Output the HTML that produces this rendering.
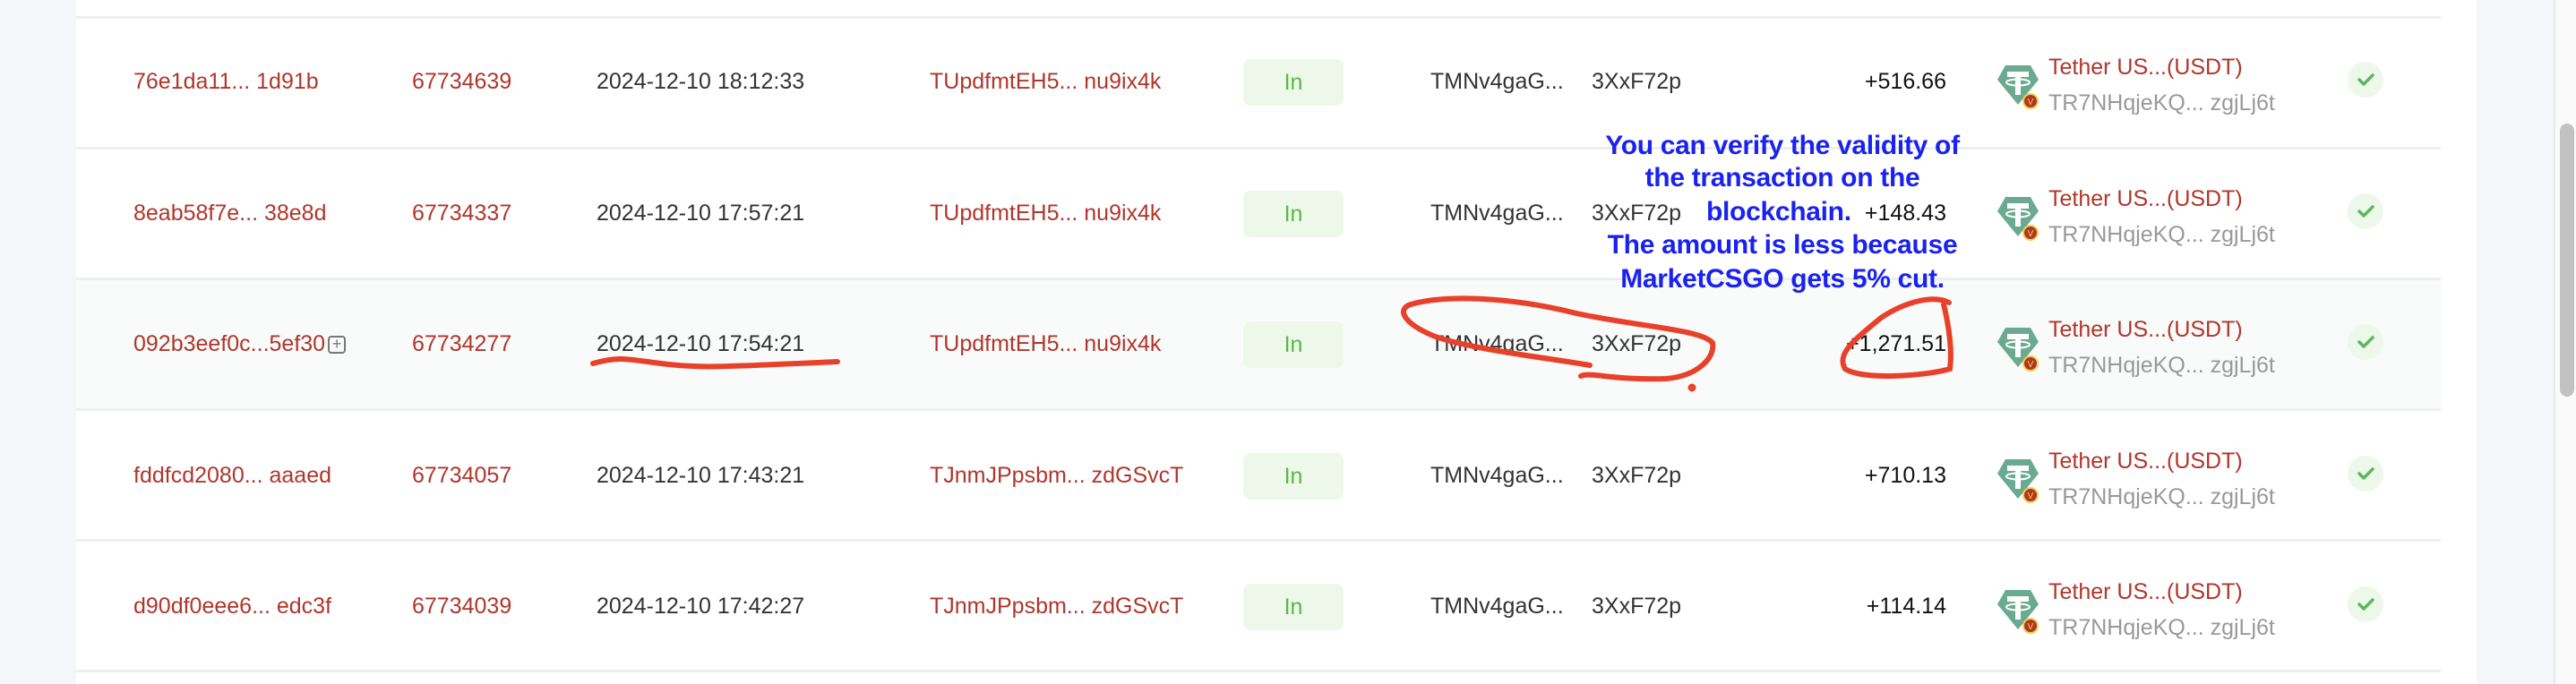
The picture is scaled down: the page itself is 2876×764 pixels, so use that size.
<!DOCTYPE html>
<html><head><meta charset="utf-8"><style>
body{margin:0;width:2876px;height:764px;overflow:hidden;background:#fff;font-family:"Liberation Sans",sans-serif;position:relative}
.a{position:absolute;white-space:nowrap;font-size:25px;line-height:30px}
.r{color:#b0362b}.d{color:#333}.g{color:#999}
.sep{position:absolute;left:85px;width:2640px;height:3px;background:#eeeeee}
.badge{position:absolute;left:1388px;width:112px;height:52px;background:#eef8ea;border-radius:8px;color:#5ab844;font-size:25px;line-height:52px;text-align:center}
.chk{position:absolute;left:2621px;width:40px;height:40px;border-radius:50%;background:#eef8ea}
.blue{position:absolute;left:1690px;width:600px;text-align:center;color:#1a22ee;font-weight:bold;font-size:30px;line-height:30px;white-space:nowrap;letter-spacing:-0.3px}
</style></head><body>
<div style="position:absolute;left:0;top:0;width:85px;height:764px;background:#f5f6fa"></div>
<div style="position:absolute;left:2765px;top:0;width:86px;height:764px;background:#f5f6fa"></div>
<div style="position:absolute;left:2851px;top:0;width:2px;height:764px;background:#e8e8e8"></div>
<div style="position:absolute;left:2853px;top:0;width:23px;height:764px;background:#fafafa"></div>
<div style="position:absolute;left:2858px;top:138px;width:16px;height:305px;border-radius:8px;background:#c2c2c2"></div>
<div style="position:absolute;left:85px;top:313px;width:2640px;height:144px;background:#f9fafa"></div>
<div class="sep" style="top:18px"></div><div class="sep" style="top:164px"></div><div class="sep" style="top:310px"></div><div class="sep" style="top:456px"></div><div class="sep" style="top:602px"></div><div class="sep" style="top:748px"></div>

<div id="rows"></div>
<script>
const rows=[["76e1da11... 1d91b","67734639","2024-12-10 18:12:33","TUpdfmtEH5... nu9ix4k","+516.66"],
["8eab58f7e... 38e8d","67734337","2024-12-10 17:57:21","TUpdfmtEH5... nu9ix4k","+148.43"],
["092b3eef0c...5ef30","67734277","2024-12-10 17:54:21","TUpdfmtEH5... nu9ix4k","+1,271.51"],
["fddfcd2080... aaaed","67734057","2024-12-10 17:43:21","TJnmJPpsbm... zdGSvcT","+710.13"],
["d90df0eee6... edc3f","67734039","2024-12-10 17:42:27","TJnmJPpsbm... zdGSvcT","+114.14"]];
let h="";
rows.forEach((r,i)=>{const c=91+i*146.5,t=c-15;
h+=`<div class="a r" style="left:149px;top:${t}px">${r[0]}<span style="display:inline-block;vertical-align:middle;margin-left:3px;width:20px;height:20px;border:2px solid #777;border-radius:4px;box-sizing:border-box;color:#777;font-size:18px;line-height:15px;text-align:center;${i==2?'':'visibility:hidden'}">+</span></div>`;
h+=`<div class="a r" style="left:460px;top:${t}px">${r[1]}</div>`;
h+=`<div class="a d" style="left:666px;top:${t}px">${r[2]}</div>`;
h+=`<div class="a r" style="left:1038px;top:${t}px">${r[3]}</div>`;
h+=`<div class="badge" style="top:${c-25}px">In</div>`;
h+=`<div class="a d" style="left:1597px;top:${t}px">TMNv4gaG...</div><div class="a d" style="left:1777px;top:${t}px">3XxF72p</div>`;
h+=`<div class="a" style="right:703px;top:${t}px;color:#111">${r[4]}</div>`;
h+=`<svg style="position:absolute;left:2230px;top:${c-20}px" width="52" height="56" viewBox="0 0 52 56"><polygon points="9,2 37,2 46,18 23,46 0,18" fill="#6aaa90"/><rect x="11" y="9" width="24" height="6" fill="#fff"/><rect x="20" y="9" width="6" height="26" fill="#fff"/><ellipse cx="23" cy="21" rx="13" ry="3.5" fill="none" stroke="#fff" stroke-width="2"/><circle cx="37" cy="42" r="8" fill="#b0362b" stroke="#f2d34a" stroke-width="2"/><text x="37" y="46" font-size="10" fill="#f2d34a" text-anchor="middle" font-family="Liberation Sans">V</text></svg>`;
h+=`<div class="a r" style="left:2287px;top:${c-31}px">Tether US...(USDT)</div>`;
h+=`<div class="a g" style="left:2287px;top:${c+9}px">TR7NHqjeKQ... zgjLj6t</div>`;
h+=`<div class="chk" style="top:${c-22}px"><svg width="40" height="40"><path d="M13 20 L18 25 L28 15" stroke="#5cb85c" stroke-width="3.5" fill="none" stroke-linecap="round" stroke-linejoin="round"/></svg></div>`;
});
document.getElementById('rows').innerHTML=h;
</script>

<div class="blue" style="top:148px">You can verify the validity of</div>
<div class="blue" style="top:184px">the transaction on the</div>
<div class="blue" style="top:222px;left:1703px;width:400px;text-align:left;padding-left:202px">blockchain.</div>
<div class="blue" style="top:259px">The amount is less because</div>
<div class="blue" style="top:297px">MarketCSGO gets 5% cut.</div>

<svg style="position:absolute;left:0;top:0" width="2876" height="764">
<g fill="none" stroke="#e8402a" stroke-width="6" stroke-linecap="round">
<path d="M662 406 C690 398 700 401 730 405 C780 412 800 410 935 404"/>
<path d="M1775 408 C1730 400 1640 390 1600 375 C1565 360 1560 345 1575 340 C1610 330 1680 330 1760 350 C1830 365 1900 368 1912 383 C1915 400 1895 420 1860 423 C1800 425 1775 415 1765 420"/>
<path d="M2176 338 C2160 330 2130 335 2100 355 C2070 380 2050 395 2060 412 C2080 425 2150 420 2177 412 C2180 390 2175 360 2170 340"/>
<circle cx="1889" cy="433" r="1.5" fill="#e8402a"/>
</g></svg>
</body></html>
